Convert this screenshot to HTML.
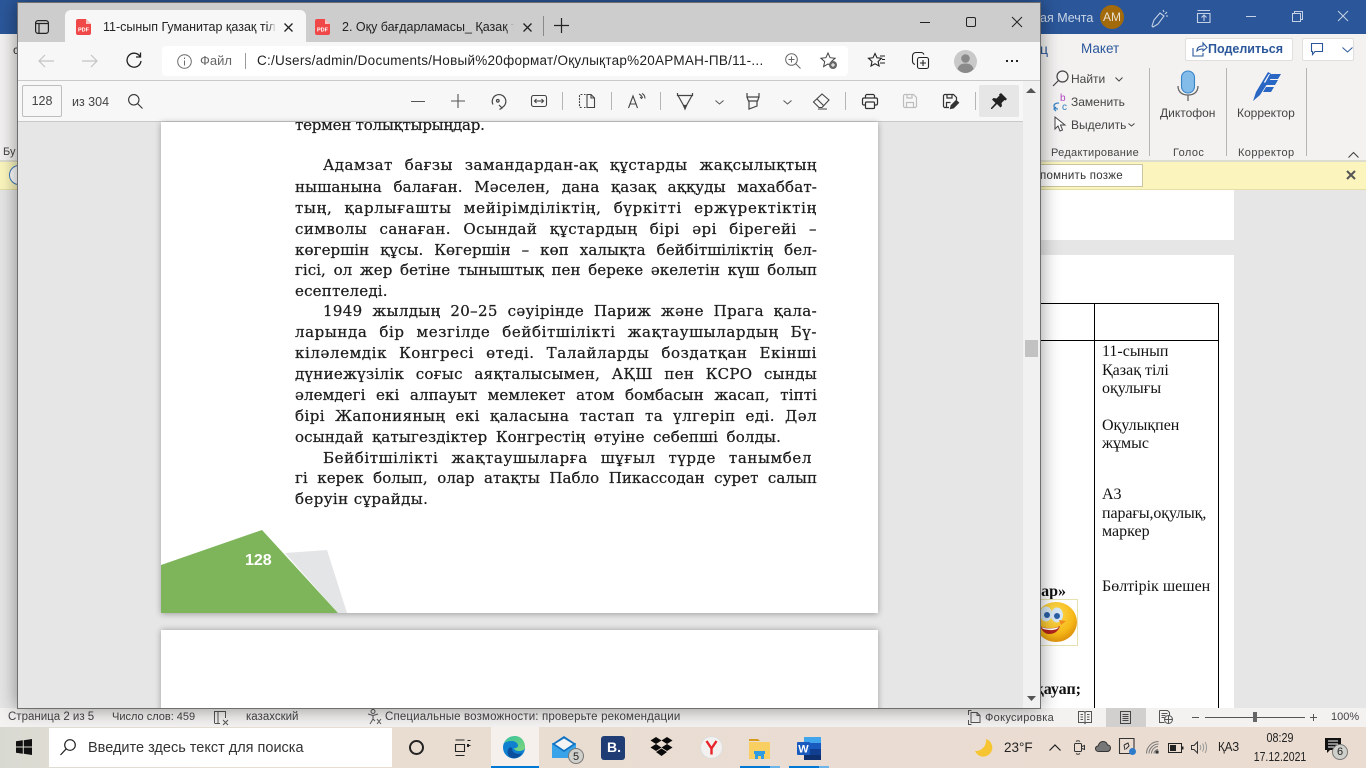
<!DOCTYPE html>
<html lang="ru"><head><meta charset="utf-8"><title>Edge PDF</title>
<style>
*{box-sizing:border-box}
html,body{margin:0;padding:0;width:1366px;height:768px;overflow:hidden;background:#e6e6e6;font-family:"Liberation Sans","DejaVu Sans",sans-serif}
.a{position:absolute}
.t{position:absolute;white-space:nowrap;line-height:20px;font-size:12px;color:#444}
.l{position:absolute;font-family:"DejaVu Serif","Liberation Serif",serif;font-size:15px;line-height:20px;color:#1c1c1c;white-space:nowrap;-webkit-text-stroke:.25px #1c1c1c}
.j{text-align:justify;text-align-last:justify;white-space:normal;height:20px;overflow:hidden}
.c{position:absolute;font-family:"Liberation Serif",serif;font-size:16px;line-height:20px;color:#111;white-space:nowrap}
svg{position:absolute;overflow:visible}
.sep{position:absolute;width:1px;background:#b5b5b5}
</style></head><body>

<!-- WORD BEHIND -->
<div class="a" style="left:0;top:0;width:1366px;height:34px;background:#2b579a"></div>
<div class="a" style="left:0;top:34px;width:1366px;height:127px;background:#f3f2f1"></div>
<div class="a" style="left:0;top:160px;width:1366px;height:30px;background:#fbf5bd;border-top:2px solid #dcdcd0;border-bottom:1px solid #e5dfa8"></div>
<div class="a" style="left:0;top:190px;width:1366px;height:518px;background:#e6e6e6"></div>
<div class="t" style="left:13px;top:40px;color:#333">c</div>
<div class="t" style="left:3px;top:142px;font-size:11px">Бу</div>
<div class="a" style="left:9px;top:165px;width:20px;height:20px;border:1px solid #3a78b8;border-radius:50%;background:#fff"></div>

<div class="t" style="left:1040px;top:8px;font-size:12.500px;color:#c9d5e8">ая Мечта</div>
<div class="a" style="left:1100px;top:5px;width:24px;height:24px;border-radius:50%;background:#a26a0a;color:#e9e0cf;font-size:12px;line-height:24px;text-align:center">АМ</div>
<svg style="left:1150px;top:8px" width="20" height="20" fill="none" stroke="#c5d1e4" stroke-width="1.1"><path d="M2 18l2-6 6-7 4 3-6 8-5 3zM13 2l1 2M17 4l-2 2M18 8h-2"/></svg>
<svg style="left:1197px;top:10px" width="15" height="14" fill="none" stroke="#c5d1e4" stroke-width="1.1"><path d="M.5 3.500h12.500v9H.5zM.5.500h12.500M7 11V5M4.500 7.500L7 5l2.500 2.500"/></svg>
<div class="a" style="left:1246px;top:16px;width:10px;height:1px;background:#c5d1e4"></div>
<svg style="left:1292px;top:11px" width="11" height="11" fill="none" stroke="#c5d1e4"><path d="M.5 2.500h8v8h-8zM2.500 2.500V.5h8v8H8.500"/></svg>
<svg style="left:1338px;top:11px" width="10" height="10" stroke="#c5d1e4"><path d="M0 0l10 10M10 0L0 10"/></svg>

<div class="t" style="left:1040px;top:39px;font-size:14px;color:#2b579a">ц</div>
<div class="t" style="left:1081px;top:39px;font-size:13.500px;color:#2b579a">Макет</div>
<div class="a" style="left:1185px;top:38px;width:108px;height:23px;background:#fff;border:1px solid #e1dfdd;border-radius:2px"></div>
<svg style="left:1192px;top:42px" width="16" height="15" fill="none" stroke="#2b579a" stroke-width="1.1"><path d="M1 6v8h10v-3M5 9c0-4 3-5 6-5V1l4 4.500L11 9V7C8 7 6 8 5 9z"/></svg>
<div class="t" style="left:1208px;top:39px;font-size:12.500px;font-weight:bold;color:#2b579a">Поделиться</div>
<div class="a" style="left:1302px;top:38px;width:52px;height:23px;background:#fff;border:1px solid #e1dfdd;border-radius:2px"></div>
<svg style="left:1311px;top:43px" width="14" height="13" fill="none" stroke="#2b579a" stroke-width="1.100"><path d="M.5.500h11v8H4l-2.500 3v-3h-1z"/></svg>
<svg style="left:1342px;top:47px" width="11" height="6" fill="none" stroke="#2b579a"><path d="M.5.500l5 4.500 5-4.500"/></svg>

<svg style="left:1052px;top:70px" width="17" height="17" fill="none" stroke="#444" stroke-width="1.200"><circle cx="10.500" cy="6.500" r="5.500"/><path d="M6.500 10.500L1 16"/></svg>
<div class="t" style="left:1071px;top:69px;font-size:12px">Найти</div>
<svg style="left:1115px;top:77px" width="8" height="5" fill="none" stroke="#444"><path d="M.5.500L4 4l3.500-3.500"/></svg>
<svg style="left:1051px;top:93px" width="18" height="18" fill="none"><path d="M8 10c-3 0-5 1-5 3s2 3 4 3M5 14l-2 2 2 2" stroke="#3a84c8" stroke-width="1.300"/><text x="9" y="8" font-size="10" fill="#b146c2" stroke="none" font-family="Liberation Sans">b</text><text x="11" y="17" font-size="10" fill="#2f7dbe" stroke="none" font-family="Liberation Sans">c</text></svg>
<div class="t" style="left:1071px;top:92px;font-size:12px">Заменить</div>
<svg style="left:1054px;top:116px" width="13" height="17" fill="#fff" stroke="#444"><path d="M1 1v12l3-3 2 5 2.500-1-2-5h4.500z"/></svg>
<div class="t" style="left:1071px;top:115px;font-size:12px">Выделить</div>
<svg style="left:1128px;top:123px" width="7" height="4" fill="none" stroke="#444"><path d="M.5.500L3.500 3l3-2.500"/></svg>
<div class="t" style="left:1051px;top:143px;font-size:11px;letter-spacing:.3px">Редактирование</div>
<div class="t" style="left:1173px;top:143px;font-size:11px;letter-spacing:.4px">Голос</div>
<div class="t" style="left:1238px;top:143px;font-size:11px;letter-spacing:.4px">Корректор</div>
<div class="sep" style="left:1149px;top:68px;height:88px"></div>
<div class="sep" style="left:1226px;top:68px;height:88px"></div>
<div class="sep" style="left:1306px;top:68px;height:88px"></div>
<svg style="left:1177px;top:70px" width="22" height="32"><rect x="4.500" y="1" width="13" height="22" rx="6.500" fill="#83bbe9" stroke="#3a85c8" stroke-width="1.100"/><path d="M1 16c0 6 4 9 10 9s10-3 10-9M11 25v6" fill="none" stroke="#666" stroke-width="1.300"/></svg>
<div class="t" style="left:1160px;top:103px;font-size:12px">Диктофон</div>
<svg style="left:1251px;top:70px" width="32" height="32" fill="#2a66c3"><path d="M2 31l3-9L17 2l5 3-13 20zM4 28l3-4" /><path d="M13 12l5-8 1 0-5 9z" fill="#fff"/><path d="M21 4h9l-3 5h-9zM18 10h9l-3 5h-9zM15 17h8l-3 5h-8z"/></svg>
<div class="t" style="left:1237px;top:103px;font-size:12px">Корректор</div>
<svg style="left:1348px;top:152px" width="11" height="6" fill="none" stroke="#444" stroke-width="1.100"><path d="M.5 5.500L5.500.5l5 5"/></svg>

<div class="a" style="left:1030px;top:164px;width:113px;height:23px;background:#fff;border:1px solid #c9c6a0"></div>
<div class="t" style="left:1040px;top:166px;font-size:11.500px;letter-spacing:.25px;color:#333">помнить позже</div>
<svg style="left:1347px;top:171px" width="8" height="8" stroke="#555" stroke-width="2"><path d="M0 0l8 8M8 0L0 8"/></svg>

<!-- Word document -->
<div class="a" style="left:40px;top:190px;width:1194px;height:50px;background:#fff"></div>
<div class="a" style="left:40px;top:255px;width:1194px;height:453px;background:#fff"></div>
<div class="a" style="left:1030px;top:303px;width:189px;height:1px;background:#000"></div>
<div class="a" style="left:1030px;top:340px;width:189px;height:1px;background:#000"></div>
<div class="a" style="left:1094px;top:303px;width:1px;height:405px;background:#000"></div>
<div class="a" style="left:1218px;top:303px;width:1px;height:405px;background:#000"></div>
<div class="c" style="left:1102px;top:342px">11-сынып</div>
<div class="c" style="left:1102px;top:361px">Қазақ тілі</div>
<div class="c" style="left:1102px;top:379px">оқулығы</div>
<div class="c" style="left:1102px;top:416px">Оқулықпен</div>
<div class="c" style="left:1102px;top:434px">жұмыс</div>
<div class="c" style="left:1102px;top:485px">А3</div>
<div class="c" style="left:1102px;top:504px;letter-spacing:-.1px">парағы,оқулық,</div>
<div class="c" style="left:1102px;top:522px">маркер</div>
<div class="c" style="left:1102px;top:577px">Бөлтірік шешен</div>
<div class="c" style="left:1030px;top:582px;font-weight:bold;width:36px;text-align:right">ар»</div>
<div class="c" style="left:1030px;top:680px;font-weight:bold;width:51px;text-align:right">қауап;</div>
<div class="a" style="left:1030px;top:599px;width:48px;height:47px;border:1px solid #e6e2b0"></div>
<svg style="left:1030px;top:600px" width="48" height="45"><defs><radialGradient id="sm" cx=".4" cy=".3" r=".75"><stop offset="0" stop-color="#ffe25a"/><stop offset=".7" stop-color="#f6b818"/><stop offset="1" stop-color="#d98a08"/></radialGradient></defs><ellipse cx="26" cy="22" rx="21" ry="20" fill="url(#sm)"/><ellipse cx="16" cy="14" rx="6" ry="7.500" fill="#d8e8f5"/><ellipse cx="27" cy="15" rx="6" ry="7.500" fill="#d8e8f5"/><circle cx="17" cy="15" r="3" fill="#2b5fa5"/><circle cx="27" cy="16" r="3" fill="#2b5fa5"/><path d="M10 26c6 3 14 3 20 0-2 6-6 8-11 8-4 0-7-3-9-8z" fill="#b3241a"/><path d="M11 27c5 2 12 2 18 0l-2 2c-5 2-10 1-14 0z" fill="#fff"/><path d="M29 20l7 1-5 4z" fill="#f08a1c"/></svg>

<!-- Status bar -->
<div class="a" style="left:0;top:708px;width:1366px;height:19px;background:#f3f2f1"></div>
<div class="t" style="left:8px;top:707px;font-size:11.500px">Страница 2 из 5</div>
<div class="t" style="left:112px;top:707px;font-size:11px">Число слов: 459</div>
<svg style="left:214px;top:711px" width="15" height="14" fill="none" stroke="#555"><path d="M.5 12V.5h11V7M.5 12.500H6M9 9l5 5M14 9l-5 5M4 .5v12"/></svg>
<div class="t" style="left:246px;top:707px;font-size:11.500px">казахский</div>
<svg style="left:367px;top:709px" width="15" height="16" fill="none" stroke="#555"><circle cx="6" cy="2.500" r="2"/><path d="M1 5l5 1.500L11 5M6 6.500V10L3 15M6 10l2 2M10 10l4 5M14 10l-4 5"/></svg>
<div class="t" style="left:385px;top:707px;font-size:11.500px;letter-spacing:.15px">Специальные возможности: проверьте рекомендации</div>
<svg style="left:968px;top:710px" width="14" height="15" fill="none" stroke="#555"><path d="M3 2.500h6l3 3v7H3zM9 2.500v3h3M.5 5V.5h3M.5 10v4.500h3"/></svg>
<div class="t" style="left:985px;top:708px;font-size:11px;letter-spacing:.3px">Фокусировка</div>
<svg style="left:1078px;top:711px" width="14" height="13" fill="none" stroke="#555"><path d="M.5.500h5.500L7 1.500 8 .5h5.500v11H8L7 12.500 6 11.500H.5zM7 1.500v11M2.500 3.500h2.500M2.500 6h2.500M2.500 8.500h2.500M9 3.500h2.500M9 6h2.500M9 8.500h2.500"/></svg>
<div class="a" style="left:1106px;top:708px;width:40px;height:19px;background:#d2d0ce"></div>
<svg style="left:1120px;top:711px" width="11" height="13" fill="none" stroke="#444"><path d="M.5.500h10v12H.5zM2.500 3.500h6M2.500 5.500h6M2.500 7.500h6M2.500 9.500h6"/></svg>
<svg style="left:1159px;top:710px" width="14" height="14" fill="none" stroke="#555"><path d="M.5.500h8l2 2v3M.5.500v12h5M2.500 3.500h6M2.500 5.500h4M2.500 7.500h3"/><circle cx="9.500" cy="9.500" r="4"/><path d="M5.500 9.500h8M9.500 5.500v8"/></svg>
<div class="a" style="left:1192px;top:717px;width:7px;height:1px;background:#555"></div>
<div class="a" style="left:1205px;top:717px;width:100px;height:1px;background:#555"></div>
<div class="a" style="left:1253px;top:712px;width:4px;height:10px;background:#666"></div>
<div class="a" style="left:1310px;top:717px;width:7px;height:1px;background:#555"></div>
<div class="a" style="left:1313px;top:714px;width:1px;height:7px;background:#555"></div>
<div class="t" style="left:1331px;top:707px;font-size:11px">100%</div>

<!-- EDGE WINDOW -->
<div class="a" style="left:17px;top:2px;width:1024px;height:707px;background:#e6e6e6;border:1px solid #6f6f6f;box-shadow:0 0 18px rgba(0,0,0,.42);overflow:hidden">
<div style="position:absolute;left:-18px;top:-3px;width:1366px;height:768px">

<div class="a" style="left:17px;top:3px;width:1024px;height:39px;background:#cdcdcd"></div>
<div class="a" style="left:17px;top:42px;width:1024px;height:39px;background:#f7f7f7;border-bottom:1px solid #c9c9c9"></div>
<div class="a" style="left:17px;top:81px;width:1024px;height:41px;background:#f7f7f7;border-bottom:1px solid #c9c9c9"></div>

<!-- tabs -->
<svg style="left:35px;top:20px" width="14" height="14" fill="none" stroke="#222" stroke-width="1.200"><rect x=".6" y=".6" width="12.800" height="12.800" rx="2.500"/><path d="M.6 3.500h12.800M4 3.500v9.900"/></svg>
<div class="a" style="left:65px;top:10px;width:241px;height:33px;background:#f7f7f7;border-radius:6px 6px 0 0"></div>
<svg style="left:76px;top:19px" width="15" height="16"><path d="M2 0h8l5 5v9a2 2 0 0 1-2 2H2a2 2 0 0 1-2-2V2a2 2 0 0 1 2-2z" fill="#f04848"/><path d="M10 0v5h5z" fill="#fbc6c6"/><text x="7.500" y="12.500" font-size="5.500" font-weight="bold" text-anchor="middle" fill="#fff" font-family="Liberation Sans">PDF</text></svg>
<div class="t" style="left:103px;top:17px;font-size:12.500px;color:#222;width:173px;overflow:hidden;-webkit-mask-image:linear-gradient(90deg,#000 95%,transparent)">11-сынып Гуманитар қазақ тілі қ</div>
<svg style="left:284px;top:23px" width="9" height="9" stroke="#222" stroke-width="1.300"><path d="M.5.500l8 8M8.500.5l-8 8"/></svg>
<svg style="left:315px;top:19px" width="15" height="16"><path d="M2 0h8l5 5v9a2 2 0 0 1-2 2H2a2 2 0 0 1-2-2V2a2 2 0 0 1 2-2z" fill="#f04848"/><path d="M10 0v5h5z" fill="#fbc6c6"/><text x="7.500" y="12.500" font-size="5.500" font-weight="bold" text-anchor="middle" fill="#fff" font-family="Liberation Sans">PDF</text></svg>
<div class="t" style="left:342px;top:17px;font-size:12.500px;color:#222;width:172px;overflow:hidden;-webkit-mask-image:linear-gradient(90deg,#000 95%,transparent)">2. Оқу бағдарламасы_ Қазақ тілі</div>
<svg style="left:523px;top:23px" width="9" height="9" stroke="#222" stroke-width="1.300"><path d="M.5.500l8 8M8.500.5l-8 8"/></svg>
<div class="a" style="left:543px;top:16px;width:1px;height:20px;background:#8a8a8a"></div>
<svg style="left:554px;top:18px" width="15" height="15" stroke="#222" stroke-width="1.200"><path d="M7.500 0v15M0 7.500h15"/></svg>
<div class="a" style="left:920px;top:22px;width:10px;height:1px;background:#222"></div>
<div class="a" style="left:966px;top:17px;width:10px;height:10px;border:1px solid #222;border-radius:2px"></div>
<svg style="left:1012px;top:17px" width="10" height="10" stroke="#222"><path d="M0 0l10 10M10 0L0 10"/></svg>

<!-- address -->
<svg style="left:38px;top:54px" width="16" height="14" fill="none" stroke="#c4c4c4" stroke-width="1.200"><path d="M16 7H1M7 1L1 7l6 6"/></svg>
<svg style="left:82px;top:54px" width="16" height="14" fill="none" stroke="#c4c4c4" stroke-width="1.200"><path d="M0 7h15M9 1l6 6-6 6"/></svg>
<svg style="left:126px;top:52px" width="16" height="17" fill="none" stroke="#222" stroke-width="1.300"><path d="M14 4.500A7 7 0 1 0 15 9M14.500.5v4.500h-4.500"/></svg>
<div class="a" style="left:162px;top:46px;width:686px;height:30px;background:#fff;border-radius:4px"></div>
<svg style="left:177px;top:54px" width="15" height="15" fill="none" stroke="#6b6b6b"><circle cx="7.500" cy="7.500" r="6.800"/><path d="M7.500 6.500v5M7.500 3.500v1.500"/></svg>
<div class="t" style="left:200px;top:51px;font-size:13px;color:#666">Файл</div>
<div class="a" style="left:245px;top:53px;width:1px;height:16px;background:#9a9a9a"></div>
<div class="t" style="left:257px;top:51px;font-size:13.500px;color:#222;letter-spacing:.26px">C:/Users/admin/Documents/Новый%20формат/Оқулықтар%20АРМАН-ПВ/11-...</div>
<svg style="left:785px;top:53px" width="16" height="16" fill="none" stroke="#666"><circle cx="6.500" cy="6.500" r="5.800"/><path d="M10.500 10.500l5 5M6.500 3.500v6M3.500 6.500h6"/></svg>
<svg style="left:820px;top:52px" width="18" height="18"><path d="M8 1l2.100 4.700 5 .5-3.800 3.400 1.100 5L8 12l-4.400 2.600 1.100-5L.9 6.200l5-.5z" fill="none" stroke="#444" stroke-width="1"/><circle cx="13" cy="13" r="4" fill="#666"/><path d="M13 11v4M11 13h4" stroke="#fff"/></svg>
<svg style="left:868px;top:52px" width="18" height="17" fill="none" stroke="#222" stroke-width="1.100"><path d="M7 1.500l2 4.300 4.500.5-3.400 3.200 1 4.500L7 11.800 3 14l1-4.500L.5 6.300 5 5.800zM12 4h5M14 7.500h3M12 11h5"/></svg>
<svg style="left:912px;top:52px" width="18" height="18" fill="none" stroke="#222" stroke-width="1.100"><path d="M3 12.500C1.500 12 .5 10.500 .5 9V4c0-2 1.500-3.500 3.500-3.500h5c1.500 0 2.500 1 3 2"/><rect x="5.500" y="5.500" width="11" height="11" rx="2"/><path d="M11 8v6M8 11h6"/></svg>
<svg style="left:954px;top:50px" width="23" height="23"><circle cx="11.500" cy="11.500" r="11.500" fill="#c9c9c9"/><circle cx="11.500" cy="8.500" r="4.300" fill="#8a8a8a"/><path d="M3.500 19c1-4 4-5.500 8-5.500s7 1.500 8 5.500c-2 2.500-5 4-8 4s-6-1.500-8-4z" fill="#8a8a8a"/></svg>
<div class="a" style="left:1006px;top:60px;width:2px;height:2px;background:#222;box-shadow:5px 0 #222,10px 0 #222"></div>

<!-- pdf toolbar -->
<div class="a" style="left:22px;top:85px;width:40px;height:32px;border:1px solid #bdbdbd;border-radius:2px;background:#f7f7f7;text-align:center;font-size:12.500px;line-height:30px;color:#444">128</div>
<div class="t" style="left:72px;top:92px;font-size:12.500px;color:#444">из 304</div>
<svg style="left:128px;top:94px" width="15" height="15" fill="none" stroke="#333" stroke-width="1.100"><circle cx="5.800" cy="5.800" r="5.200"/><path d="M9.500 9.500l5 5"/></svg>
<div class="a" style="left:411px;top:101px;width:14px;height:1px;background:#555"></div>
<svg style="left:451px;top:94px" width="14" height="14" stroke="#555" stroke-width="1.100"><path d="M7 0v14M0 7h14"/></svg>
<svg style="left:490px;top:93px" width="16" height="17" fill="none" stroke="#444" stroke-width="1.200"><path d="M3 11.500A6.800 6.800 0 1 1 12 14.500"/><circle cx="7.800" cy="7.800" r="1.300"/><path d="M9 12l3 3-2.500 1.500"/></svg>
<svg style="left:531px;top:95px" width="16" height="12" fill="none" stroke="#444" stroke-width="1.100"><rect x=".5" y=".5" width="15" height="11" rx="2"/><path d="M3.500 6h9"/><path d="M5.500 4L3.500 6l2 2M10.500 4l2 2-2 2" /></svg>
<div class="sep" style="left:562px;top:92px;height:18px"></div>
<svg style="left:579px;top:94px" width="16" height="14" fill="none" stroke="#444" stroke-width="1.100"><path d="M3.500.5H1.500l-1 1v11l1 1h2M5 13.500h1.500M5 .5h1.500" stroke-dasharray="2 1"/><path d="M8 .5h4l3.500 3.500v9.500H8zM12 .5V4h3.500"/></svg>
<div class="sep" style="left:611px;top:92px;height:18px"></div>
<svg style="left:628px;top:93px" width="18" height="16" fill="none" stroke="#444" stroke-width="1.100"><path d="M.5 15L5 3l4.500 12M2 11h6M11 1c2 1 3 2 3.500 4M12 4c1 .5 1.500 1 1.800 2M14 .5c2 1 3 3 3 5"/></svg>
<div class="sep" style="left:660px;top:92px;height:18px"></div>
<svg style="left:677px;top:93px" width="16" height="17" fill="none" stroke="#444" stroke-width="1.200"><path d="M.5 0v2.500h15V0M1 2.500L8 15l7-12.500"/><path d="M6.500 12.500h3L8 16z" fill="#444"/></svg>
<svg style="left:715px;top:100px" width="9" height="5" fill="none" stroke="#555"><path d="M.5.500L4.500 4l4-3.500"/></svg>
<svg style="left:746px;top:93px" width="14" height="17" fill="none" stroke="#444" stroke-width="1.200"><path d="M1 0v4h12V0M1 4l1.500 4h9L13 4M3 8v8l8-3V8"/></svg>
<svg style="left:783px;top:100px" width="9" height="5" fill="none" stroke="#555"><path d="M.5.500L4.500 4l4-3.500"/></svg>
<svg style="left:813px;top:93px" width="17" height="17" fill="none" stroke="#444" stroke-width="1.100"><path d="M.5 9L9 1l7 6-7 7.500h-3zM4 6l6.500 6.500M5 16h9"/></svg>
<div class="sep" style="left:845px;top:92px;height:18px"></div>
<svg style="left:862px;top:94px" width="16" height="15" fill="none" stroke="#333" stroke-width="1.200"><path d="M3.500 4V1.500l1-1h7l1 1V4M3.500 11H2c-1 0-1.500-.5-1.500-1.500v-4C.5 4.500 1 4 2 4h12c1 0 1.500.5 1.500 1.500v4c0 1-.5 1.500-1.500 1.500h-1.500"/><rect x="3.500" y="8" width="9" height="6.500" rx="1"/></svg>
<svg style="left:903px;top:94px" width="14" height="14" fill="none" stroke="#bdbdbd" stroke-width="1.200"><path d="M.5 1.500l1-1h9l3 3v9l-1 1h-11l-1-1zM3.500 13.500v-5h7v5M4 .5v3.500h5V.5"/></svg>
<svg style="left:943px;top:94px" width="16" height="15" fill="none" stroke="#333" stroke-width="1.200"><path d="M6 13.500H1.500l-1-1v-11l1-1h9l3 3V6M3.500 13.500v-5h4M4 .5v3.500h5V.5"/><path d="M7.500 14.500l.7-3 5-5 2.300 2.300-5 5z" fill="#333"/></svg>
<div class="sep" style="left:975px;top:92px;height:18px"></div>
<div class="a" style="left:979px;top:85px;width:40px;height:32px;background:#e6e6e6;border-radius:2px"></div>
<svg style="left:991px;top:93px" width="16" height="16" fill="#222"><path d="M10 0l6 6-1.500 1.500-1-.5-3 3 .5 3-1.500 1.500-3.500-3.500L1 16l-1 0 0-1 4.500-5L1 6.500 2.500 5l3 .5 3-3-.5-1z"/></svg>

<!-- pdf view -->
<div class="a" style="left:17px;top:122px;width:1006px;height:587px;background:#e6e6e6"></div>
<div class="a" style="left:161px;top:122px;width:717px;height:491px;background:#fff;box-shadow:0 1px 6px rgba(0,0,0,.32);overflow:hidden"></div>
<div class="a" style="left:161px;top:630px;width:717px;height:90px;background:#fff;box-shadow:0 0 6px rgba(0,0,0,.32)"></div>

<div class="a" style="left:161px;top:122px;width:717px;height:491px;overflow:hidden">
<div class="l" style="left:134px;top:-7px;letter-spacing:-.2px">термен толықтырыңдар.</div>
<div class="l j" style="left:162px;top:33px;width:494px;letter-spacing:.45px">Адамзат бағзы замандардан-ақ құстарды жақсылықтың</div>
<div class="l j" style="left:134px;top:55px;width:522px;letter-spacing:.15px">нышанына балаған. Мәселен, дана қазақ аққуды махаббат-</div>
<div class="l j" style="left:134px;top:76px;width:522px;letter-spacing:.7px">тың, қарлығашты мейірімділіктің, бүркітті ержүректіктің</div>
<div class="l j" style="left:134px;top:97px;width:522px;letter-spacing:.45px">символы санаған. Осындай құстардың бірі әрі бірегейі –</div>
<div class="l j" style="left:134px;top:118px;width:522px;letter-spacing:.1px">көгершін құсы. Көгершін – көп халықта бейбітшіліктің бел-</div>
<div class="l j" style="left:134px;top:138px;width:522px;letter-spacing:.05px">гісі, ол жер бетіне тыныштық пен береке әкелетін күш болып</div>
<div class="l" style="left:134px;top:159px;letter-spacing:.2px">есептеледі.</div>
<div class="l j" style="left:162px;top:179px;width:494px;letter-spacing:.35px">1949 жылдың 20–25 сәуірінде Париж және Прага қала-</div>
<div class="l j" style="left:134px;top:200px;width:522px;letter-spacing:.6px">ларында бір мезгілде бейбітшілікті жақтаушылардың Бү-</div>
<div class="l j" style="left:134px;top:221px;width:522px;letter-spacing:.6px">кіләлемдік Конгресі өтеді. Талайларды боздатқан Екінші</div>
<div class="l j" style="left:134px;top:242px;width:522px;letter-spacing:.3px">дүниежүзілік соғыс аяқталысымен, АҚШ пен КСРО сынды</div>
<div class="l j" style="left:134px;top:263px;width:522px;letter-spacing:.1px">әлемдегі екі алпауыт мемлекет атом бомбасын жасап, тіпті</div>
<div class="l j" style="left:134px;top:284px;width:522px;letter-spacing:.45px">бірі Жапонияның екі қаласына тастап та үлгеріп еді. Дәл</div>
<div class="l j" style="left:134px;top:305px;width:486px;letter-spacing:.15px">осындай қатыгездіктер Конгрестің өтуіне себепші болды.</div>
<div class="l j" style="left:162px;top:326px;width:489px;letter-spacing:.6px">Бейбітшілікті жақтаушыларға шұғыл түрде танымбел</div>
<div class="l j" style="left:134px;top:346px;width:522px;letter-spacing:.05px">гі керек болып, олар атақты Пабло Пикассодан сурет салып</div>
<div class="l" style="left:134px;top:367px;letter-spacing:.4px">беруін сұрайды.</div>
</div>

<svg style="left:161px;top:530px" width="190" height="83"><path d="M124 23l42-3 20 63h-9z" fill="#e4e5e7"/><path d="M0 35L101 0l76 83H0z" fill="#7eb55b"/></svg>
<div class="t" style="left:245px;top:551px;font-size:16px;font-weight:bold;color:#fff">128</div>

<!-- scrollbar -->
<div class="a" style="left:1023px;top:81px;width:17px;height:628px;background:#f1f1f1"></div>
<svg style="left:1026px;top:88px" width="10" height="5" fill="#555"><path d="M5 0l5 5H0z"/></svg>
<div class="a" style="left:1025px;top:340px;width:13px;height:17px;background:#c2c2c2"></div>
<svg style="left:1027px;top:696px" width="9" height="5" fill="#555"><path d="M4.500 5L0 0h9z"/></svg>
</div></div>

<!-- TASKBAR -->
<div class="a" style="left:0;top:727px;width:1366px;height:41px;background:linear-gradient(90deg,#d8dad2 0,#dfdcd3 60px,#e9ddd2 300px,#eadcd1 100%)"></div>
<svg style="left:16px;top:739px" width="16" height="16" fill="#111"><path d="M0 2.300L6.800 1.300v6.200H0zM7.800 1.200L16 0v7.500H7.800zM0 8.500h6.800v6.200L0 13.700zM7.800 8.500H16V16l-8.200-1.200z"/></svg>
<div class="a" style="left:49px;top:728px;width:343px;height:39px;background:#fff"></div>
<svg style="left:60px;top:739px" width="16" height="17" fill="none" stroke="#222" stroke-width="1.200"><circle cx="10" cy="6" r="5.300"/><path d="M6.200 9.800L.5 16"/></svg>
<div class="t" style="left:88px;top:738px;font-size:14.500px;color:#333">Введите здесь текст для поиска</div>
<div class="a" style="left:409px;top:740px;width:15px;height:15px;border:2.300px solid #222;border-radius:50%"></div>
<svg style="left:455px;top:740px" width="16" height="16" fill="none" stroke="#222" stroke-width="1.100"><path d="M.5 0h9M.5 4.500h9v7h-9zM.5 15.500h9M12.500.5h3M12.500 5.500h3"/><path d="M13 4v3" stroke-width="2"/></svg>
<div class="a" style="left:491px;top:727px;width:48px;height:41px;background:#f5f0ec;border-bottom:2px solid #0078d4"></div>
<svg style="left:503px;top:736px" width="22" height="23"><defs><linearGradient id="eg" x1="0" y1="0" x2="1" y2="1"><stop offset="0" stop-color="#35c1a0"/><stop offset="1" stop-color="#7ed67a"/></linearGradient></defs><circle cx="11" cy="11.500" r="11" fill="#0f7fd0"/><path d="M1 8C3 1 9 0 12 0c6 0 10 5 10 11 0 3-3 4-6 4-4 0-5-2-5-3 2 0 4 0 4-3-1-3-4-4-6-4C5 5 2 6 1 8z" fill="url(#eg)"/><path d="M9 12c0 5 5 7 10 5-2 4-6 6-10 5-4-1-6-6-3-10 1-1 2-1 3 0z" fill="#0a4f9e"/></svg>
<svg style="left:552px;top:736px" width="32" height="27"><rect y="7" width="24" height="15" fill="#38a3e8"/><path d="M0 8L12 0l12 8-12 8z" fill="#0f71c2"/><path d="M3 8l9-5.500L21 8l-9 6z" fill="#f4f4f4"/><circle cx="24" cy="20" r="7.500" fill="#cfcfcb" stroke="#777"/><text x="24" y="24" font-size="11" text-anchor="middle" fill="#222" font-family="Liberation Sans">5</text></svg>
<div class="a" style="left:601px;top:736px;width:24px;height:24px;background:#1f3d74;border-radius:3px;color:#fff;font-weight:bold;font-size:14px;line-height:23px;padding-left:6px">B.</div>
<svg style="left:650px;top:737px" width="23" height="20" fill="#0a0a0a"><path d="M6 0l5.500 3.500L6 7 .5 3.500zM17 0l5.500 3.500L17 7l-5.500-3.500zM6 7l5.500 3.500L6 14 .5 10.500zM17 7l5.500 3.500L17 14l-5.500-3.500zM11.500 11.500L17 15l-5.500 4L6 15z"/></svg>
<svg style="left:700px;top:736px" width="23" height="23"><circle cx="11.500" cy="11.500" r="11" fill="#f3f1ef" stroke="#ddd"/><path d="M6.500 5l5 7.500v6M16.500 5l-5 7.500" fill="none" stroke="#e8222a" stroke-width="2.400"/></svg>
<svg style="left:749px;top:739px" width="22" height="21"><path d="M0 0h9l2 2H0z" fill="#d99b1c"/><path d="M0 3h21v17H0z" fill="#f8cf60"/><path d="M6 14h9v6h-3v-3H9v3H6z" fill="#2f9be0"/><path d="M5 12h11v3H5z" fill="#2f9be0"/></svg>
<svg style="left:797px;top:737px" width="24" height="23"><path d="M7 0h17v23H7z" fill="#2b7cd3"/><path d="M7 6h17v6H7z" fill="#185abd"/><path d="M7 12h17v6H7z" fill="#103f91"/><path d="M7 18h17v5H7z" fill="#0e2f6e"/><path d="M7 0h17v6H7z" fill="#41a5ee"/><rect y="5" width="13" height="13" rx="1" fill="#185abd"/><text x="6.500" y="15.500" font-size="11" font-weight="bold" text-anchor="middle" fill="#fff" font-family="Liberation Sans">W</text></svg>
<div class="a" style="left:740px;top:766px;height:2px;background:#0078d4;border-right:10px solid #6db4e8;width:40px"></div>
<div class="a" style="left:789px;top:766px;width:40px;height:2px;background:#0078d4;border-right:10px solid #6db4e8"></div>

<svg style="left:975px;top:739px" width="19" height="18"><path d="M11 0A9 9 0 1 1 0 12A10.500 10.500 0 0 0 11 0z" fill="#f7c531"/></svg>
<div class="t" style="left:1004px;top:738px;font-size:13.500px;color:#222">23°F</div>
<svg style="left:1049px;top:744px" width="12" height="7" fill="none" stroke="#222" stroke-width="1.200"><path d="M.5 6.500L6 1l5.500 5.500"/></svg>
<svg style="left:1074px;top:740px" width="11" height="15" fill="none" stroke="#333"><path d="M2 1.500c1-1 3-1 4 0M2 13.500c1 1 3 1 4 0"/><rect x=".5" y="3.500" width="7" height="8" rx="1"/><path d="M8 6.500l2.500-1v4L8 8.500"/></svg>
<svg style="left:1095px;top:741px" width="16" height="11" fill="#777" stroke="#333"><path d="M3.500 10.500C1 10.500.5 8.500.5 7.500c0-1.500 1.500-2.500 2.500-2.500C4 2 6 .5 8 .5c2.500 0 4 1.500 4.500 3.500 2 0 3 1.500 3 3 0 2-1.500 3.500-3 3.500z"/></svg>
<svg style="left:1119px;top:738px" width="18" height="18"><path d="M.5.500h14.500v15H.5z" fill="none" stroke="#333" stroke-width="1.100"/><path d="M5 7l4-2 1 3-3 3M5 7l1 5" fill="none" stroke="#333"/><circle cx="13.500" cy="13.500" r="3.500" fill="#2d7bc9"/></svg>
<svg style="left:1146px;top:741px" width="13" height="13" fill="none" stroke="#777"><path d="M.5 12.500C.5 6 6 .5 12.500.5M3 12.500c0-5 4.500-9.500 9.500-9.500M5.500 12.500C5.500 9 8.500 5.500 12 5.500M8 12.500c0-2 2-4 4-4"/><circle cx="11" cy="11" r="1.500" fill="#222"/></svg>
<svg style="left:1168px;top:743px" width="16" height="10"><rect x=".5" y=".5" width="13" height="9" fill="none" stroke="#222"/><rect x="2" y="2" width="6" height="6" fill="#222"/><rect x="14" y="3.500" width="1.500" height="3" fill="#222"/></svg>
<svg style="left:1191px;top:741px" width="16" height="13" fill="none" stroke="#333"><path d="M.5 4.500h2.500L6.500 1v11L3 8.500H.5z"/><path d="M9 4c1 1.500 1 3.500 0 5M11.500 2.500c1.500 2.500 1.500 5.500 0 8M14 1c2 3 2 8 0 11" stroke="#999"/></svg>
<div class="t" style="left:1218px;top:737px;font-size:12.500px;color:#222;transform-origin:0 50%;transform:scaleX(.92)">ҚАЗ</div>
<div class="t" style="left:1260px;top:728px;font-size:12.500px;color:#222;width:40px;text-align:center;transform:scaleX(.86)">08:29</div>
<div class="t" style="left:1245px;top:747px;font-size:12.500px;color:#222;width:70px;text-align:center;transform:scaleX(.84)">17.12.2021</div>
<svg style="left:1325px;top:738px" width="16" height="15" fill="#111"><path d="M0 0h16v12H5l-3 3v-3H0z"/><path d="M3 3h10M3 6h10M3 9h7" stroke="#fff"/></svg>
<div class="a" style="left:1332px;top:744px;width:16px;height:16px;border-radius:50%;background:#cfcfcb;border:1px solid #777;font-size:11px;line-height:14px;text-align:center;color:#222">6</div>

</body></html>
